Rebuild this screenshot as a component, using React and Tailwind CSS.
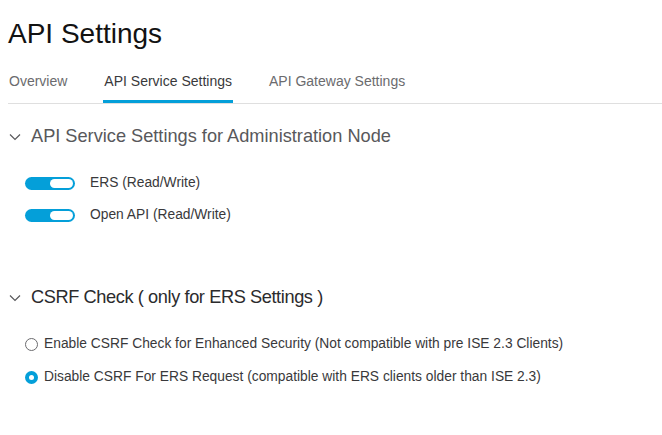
import React from 'react';

const Chevron = () => (
  <svg width="12" height="8" viewBox="0 0 12 8" className="shrink-0">
    <path d="M1 1.5 L6 6.5 L11 1.5" fill="none" stroke="#58585b" strokeWidth="1.2" />
  </svg>
);

const Toggle = () => (
  <div className="w-[50px] h-[13px] rounded-full bg-[#049fd9] flex items-center justify-end pr-[2px]">
    <div className="w-[23px] h-[9px] rounded-full bg-white" />
  </div>
);

const Radio = ({ checked }) =>
  checked ? (
    <div className="w-[13px] h-[13px] rounded-full bg-[#049fd9] flex items-center justify-center shrink-0">
      <div className="w-[5px] h-[5px] rounded-full bg-white" />
    </div>
  ) : (
    <div className="w-[13px] h-[13px] rounded-full border border-[#6b6b6e] bg-white shrink-0" />
  );

const App = () => {
  return (
    <div className="w-[662px] h-[435px] bg-white pl-[8px] pt-[14px] font-['Liberation_Sans',Arial,sans-serif] overflow-hidden">
      {/* Title */}
      <h1 className="text-[28px] leading-[40px] text-[#121212]">API Settings</h1>

      {/* Tabs */}
      <div className="mt-[18px] flex gap-[36px] border-b border-[#dfdfdf] text-[14px] leading-[19px]">
        <div className="pl-px pb-[9px] border-b-[3px] border-transparent text-[#6b6b6e]">Overview</div>
        <div className="px-px pb-[9px] border-b-[3px] border-[#049fd9] text-[#39393b]">API Service Settings</div>
        <div className="pb-[9px] border-b-[3px] border-transparent text-[#6b6b6e]">API Gateway Settings</div>
      </div>

      {/* Section 1 */}
      <div className="mt-[21px] flex items-center gap-[10px] pl-px h-[24px] text-[18.2px] text-[#58585b]">
        <Chevron />
        <span>API Service Settings for Administration Node</span>
      </div>
      <div className="mt-[24px] flex flex-col gap-[12px] pl-[17px] text-[13.8px] text-[#39393b]">
        <div className="flex items-center gap-[15px] h-[20px]">
          <Toggle />
          <span>ERS (Read/Write)</span>
        </div>
        <div className="flex items-center gap-[15px] h-[20px]">
          <Toggle />
          <span>Open API (Read/Write)</span>
        </div>
      </div>

      {/* Section 2 */}
      <div className="mt-[61px] flex items-center gap-[10px] pl-px h-[24px] text-[18.2px] text-[#2b2b2d]">
        <Chevron />
        <span className="tracking-[-0.4px]">CSRF Check ( only for ERS Settings )</span>
      </div>
      <div className="mt-[24px] flex flex-col gap-[13px] pl-[17px] text-[13.8px] text-[#39393b]">
        <div className="flex items-center gap-[6px] h-[20px]">
          <Radio />
          <span>Enable CSRF Check for Enhanced Security (Not compatible with pre ISE 2.3 Clients)</span>
        </div>
        <div className="flex items-center gap-[6px] h-[20px]">
          <Radio checked />
          <span>Disable CSRF For ERS Request (compatible with ERS clients older than ISE 2.3)</span>
        </div>
      </div>
    </div>
  );
};

export default App;
